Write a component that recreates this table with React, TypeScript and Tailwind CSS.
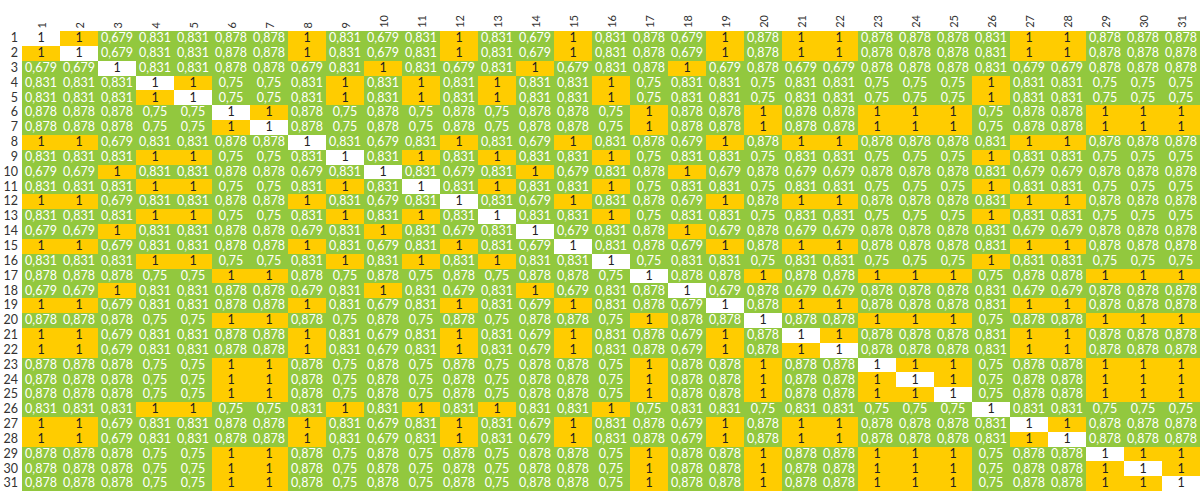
import React from "react";

// cluster membership for each item (1-based index -> group)
const groups: Record<string, number[]> = {
  A: [1, 2, 8, 12, 15, 19, 21, 22, 27, 28],
  B: [3, 10, 14, 18],
  C: [4, 5, 9, 11, 13, 16, 26],
  D: [6, 7, 17, 20, 23, 24, 25, 29, 30, 31],
};

const between: Record<string, string> = {
  AB: "0,679",
  AC: "0,831",
  AD: "0,878",
  BC: "0,831",
  BD: "0,878",
  CD: "0,75",
};

const N = 31;
const groupOf = (i: number) => Object.keys(groups).find((g) => groups[g].includes(i))!;

function value(r: number, c: number) {
  const a = groupOf(r);
  const b = groupOf(c);
  if (a === b) return "1";
  return between[[a, b].sort().join("")];
}

const idx = Array.from({ length: N }, (_, i) => i + 1);

export default function App() {
  return (
    <div className="w-[1200px] h-[492px] bg-white overflow-hidden font-['Lato',sans-serif]">
      <div className="grid grid-cols-[22px_repeat(31,38px)] grid-rows-[31px_repeat(31,14.85px)]">
        <div />
        {idx.map((c) => (
          <div key={"h" + c} className="flex items-end justify-center pb-[3px]">
            <span className="[writing-mode:vertical-rl] rotate-180 text-[11px] leading-none text-[#333]">{c}</span>
          </div>
        ))}
        {idx.map((r) => (
          <React.Fragment key={"r" + r}>
            <div className="flex items-center justify-end pr-[4px] text-[12.5px] leading-none text-[#333]">{r}</div>
            {idx.map((c) => {
              const v = value(r, c);
              const cls =
                r === c
                  ? "bg-white text-[#222]"
                  : v === "1"
                  ? "bg-[#ffcc00] text-[#222]"
                  : "bg-[#92c83e] text-white";
              return (
                <div key={c} className={`flex items-center justify-center text-[12.5px] leading-none ${cls}`}>
                  {v}
                </div>
              );
            })}
          </React.Fragment>
        ))}
      </div>
    </div>
  );
}
